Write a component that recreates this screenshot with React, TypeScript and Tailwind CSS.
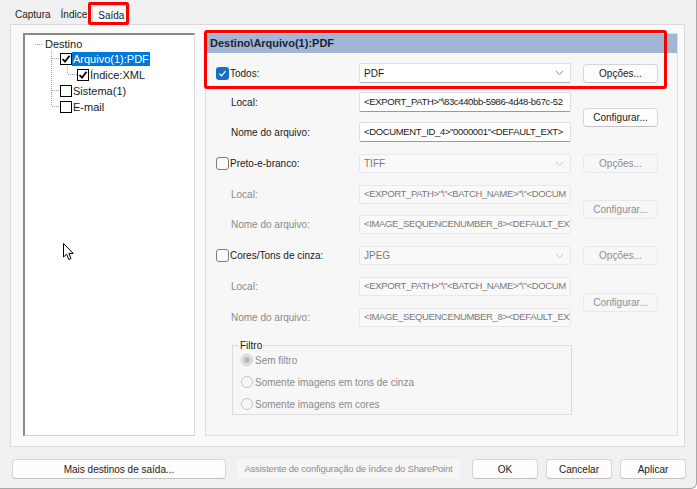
import React from "react";

const font = { fontFamily: '"Liberation Sans", Arial, sans-serif' };

function Check({ blue }: { blue?: boolean }) {
  if (blue) {
    return (
      <span className="w-[13px] h-[13px] rounded-[3px] bg-[#1a6fc4] flex items-center justify-center shrink-0">
        <svg width="9" height="9" viewBox="0 0 9 9">
          <path d="M1.5 4.8 L3.6 6.8 L7.6 2.2" stroke="#ffffff" strokeWidth="1.2" fill="none" />
        </svg>
      </span>
    );
  }
  return <span className="w-[13px] h-[13px] rounded-[3px] border shrink-0 bg-[#fbfbfb] border-[#7c7c7c]" />;
}

function TreeBox({ checked }: { checked?: boolean }) {
  return (
    <span className="w-[12px] h-[12px] border-[1.5px] border-black bg-white flex items-center justify-center shrink-0">
      {checked && (
        <svg width="10" height="10" viewBox="0 0 10 10">
          <path d="M1.5 5 L4 7.6 L8.6 1.8" stroke="#000" strokeWidth="1.8" fill="none" />
        </svg>
      )}
    </span>
  );
}

function Chevron({ light }: { light?: boolean }) {
  return (
    <svg width="9" height="6" viewBox="0 0 9 6" className="shrink-0">
      <path d="M1 1 L4.5 4.5 L8 1" stroke={light ? "#c8c8c8" : "#8a8a8a"} strokeWidth="1" fill="none" />
    </svg>
  );
}

function Select({ value, disabled, h }: { value: string; disabled?: boolean; h: string }) {
  return (
    <div
      className={`w-[212px] shrink-0 ${h} flex items-center justify-between pl-[4px] pr-[6px] rounded-[2px] border ${
        disabled ? "bg-[#f9f9f9] border-[#e8e8e8] text-[#7a7a7a]" : "bg-white border-[#dedede] border-b-[#b5b5b5] text-[#1a1a1a]"
      }`}
    >
      <span>{value}</span>
      <Chevron light={disabled} />
    </div>
  );
}

function Input({ value, disabled, h }: { value: string; disabled?: boolean; h: string }) {
  return (
    <div
      className={`w-[212px] shrink-0 ${h} flex items-center pl-[4px] overflow-hidden whitespace-nowrap rounded-[2px] border text-[9.5px] tracking-[-0.35px] ${
        disabled ? "bg-[#f9f9f9] border-[#e8e8e8] text-[#7a7a7a]" : "bg-white border-[#dedede] border-b-[#9a9a9a] text-[#1a1a1a]"
      }`}
    >
      {value}
    </div>
  );
}

function Btn({ label, disabled, w = "w-[75px]", h = "h-[19px]" }: { label: string; disabled?: boolean; w?: string; h?: string }) {
  return (
    <div
      className={`${w} ${h} shrink-0 flex items-center justify-center rounded-[4px] border ${
        disabled ? "bg-[#f7f7f7] border-[#e9e9e9] text-[#8e8e8e]" : "bg-[#fdfdfd] border-[#d6d6d6] border-b-[#c2c2c2] text-[#1a1a1a]"
      }`}
    >
      {label}
    </div>
  );
}

function SubRow({ label, value, disabled, h }: { label: string; value: string; disabled?: boolean; h: string }) {
  return (
    <div className="flex items-center">
      <span className={`w-[143px] shrink-0 pl-[15px] ${disabled ? "text-[#8a8a8a]" : "text-[#1a1a1a]"}`}>{label}</span>
      <Input value={value} disabled={disabled} h={h} />
    </div>
  );
}

function Radio({ label, checked }: { label: string; checked?: boolean }) {
  return (
    <div className="flex items-center gap-[2px] h-[22px] text-[#8a8a8a]">
      <span className="w-[12px] h-[12px] rounded-full border border-[#c4c4c4] bg-[#f7f7f7] flex items-center justify-center">
        {checked && <span className="w-[8px] h-[8px] rounded-full bg-[#b5b5b5] border-[2px] border-[#c9c9c9]" />}
      </span>
      <span>{label}</span>
    </div>
  );
}

function Tree() {
  return (
    <div className="relative w-[172px] h-[403px] bg-white border-l-2 border-t-2 border-[#8a8a8a] border-r border-b border-r-[#dcdcdc] border-b-[#cfcfcf] text-[11px] text-[#1a1a1a]">
      {/* connector lines */}
      <svg className="absolute left-0 top-0" width="120" height="90">
        <g stroke="#a0a0a0" strokeWidth="1" strokeDasharray="1 1">
          <line x1="10" y1="9.5" x2="18" y2="9.5" />
          <line x1="26.5" y1="15" x2="26.5" y2="71" />
          <line x1="27" y1="23.5" x2="35" y2="23.5" />
          <line x1="42.5" y1="31" x2="42.5" y2="39" />
          <line x1="43" y1="39.5" x2="52" y2="39.5" />
          <line x1="27" y1="55.5" x2="35" y2="55.5" />
          <line x1="27" y1="71.5" x2="35" y2="71.5" />
        </g>
      </svg>
      <div className="flex flex-col pt-[2px]">
        <div className="h-[14px] pl-[20px] flex items-center">Destino</div>
        <div className="h-[16px] pl-[35px] flex items-center">
          <TreeBox checked />
          <span className="bg-[#0078d7] text-white px-[1px] h-[14px] flex items-center">Arquivo(1):PDF</span>
        </div>
        <div className="h-[16px] pl-[52px] flex items-center gap-[1px]">
          <TreeBox checked />
          <span>Índice:XML</span>
        </div>
        <div className="h-[16px] pl-[35px] flex items-center gap-[1px]">
          <TreeBox />
          <span>Sistema(1)</span>
        </div>
        <div className="h-[16px] pl-[35px] flex items-center gap-[1px]">
          <TreeBox />
          <span>E-mail</span>
        </div>
      </div>
      {/* mouse pointer */}
      <svg className="absolute left-[38px] top-[208px]" width="12" height="18" viewBox="0 0 12 18">
        <path d="M0.5 0.5 L0.5 14 L3.6 11.2 L5.8 16.5 L8 15.6 L5.9 10.4 L10.2 10.4 Z" fill="#ffffff" stroke="#000" strokeWidth="1" />
      </svg>
    </div>
  );
}

function DetailPanel() {
  return (
    <div className="relative w-[473px] h-[403px] bg-[#f7f7f7] border border-[#dcdcdc] text-[10px]">
      <div className="h-[19px] bg-[#a0b6d4] flex items-center pl-[4px] text-[11px] font-bold text-[#1c2333]">
        Destino\Arquivo(1):PDF
      </div>
      <div className="pl-[10px] flex flex-col">
        {/* Todos */}
        <div className="flex items-center mt-[10px] h-[20px]">
          <div className="w-[143px] shrink-0 flex items-center gap-[1px] text-[#1a1a1a]">
            <Check blue />
            <span>Todos:</span>
          </div>
          <Select value="PDF" h="h-[20px]" />
          <div className="ml-[12px]">
            <Btn label="Opções..." />
          </div>
        </div>
        <div className="flex items-center mt-[9px]">
          <div className="flex flex-col gap-[10px]">
            <SubRow label="Local:" value={'<EXPORT_PATH>"\\83c440bb-5986-4d48-b67c-52'} h="h-[20px]" />
            <SubRow label="Nome do arquivo:" value={'<DOCUMENT_ID_4>"0000001"<DEFAULT_EXT>'} h="h-[20px]" />
          </div>
          <div className="ml-[12px]">
            <Btn label="Configurar..." />
          </div>
        </div>

        {/* Preto-e-branco */}
        <div className="flex items-center mt-[12px] h-[19px]">
          <div className="w-[143px] shrink-0 flex items-center gap-[1px] text-[#1a1a1a]">
            <Check />
            <span>Preto-e-branco:</span>
          </div>
          <Select value="TIFF" disabled h="h-[19px]" />
          <div className="ml-[12px]">
            <Btn label="Opções..." disabled />
          </div>
        </div>
        <div className="flex items-center mt-[12px]">
          <div className="flex flex-col gap-[11px]">
            <SubRow label="Local:" value={'<EXPORT_PATH>"\\"<BATCH_NAME>"\\"<DOCUM'} disabled h="h-[19px]" />
            <SubRow label="Nome do arquivo:" value="<IMAGE_SEQUENCENUMBER_8><DEFAULT_EXT:" disabled h="h-[19px]" />
          </div>
          <div className="ml-[12px]">
            <Btn label="Configurar..." disabled />
          </div>
        </div>

        {/* Cores */}
        <div className="flex items-center mt-[12px] h-[19px]">
          <div className="w-[143px] shrink-0 flex items-center gap-[1px] text-[#1a1a1a]">
            <Check />
            <span>Cores/Tons de cinza:</span>
          </div>
          <Select value="JPEG" disabled h="h-[19px]" />
          <div className="ml-[12px]">
            <Btn label="Opções..." disabled />
          </div>
        </div>
        <div className="flex items-center mt-[12px]">
          <div className="flex flex-col gap-[12px]">
            <SubRow label="Local:" value={'<EXPORT_PATH>"\\"<BATCH_NAME>"\\"<DOCUM'} disabled h="h-[19px]" />
            <SubRow label="Nome do arquivo:" value="<IMAGE_SEQUENCENUMBER_8><DEFAULT_EXT:" disabled h="h-[19px]" />
          </div>
          <div className="ml-[12px]">
            <Btn label="Configurar..." disabled />
          </div>
        </div>

        {/* Filtro */}
        <fieldset className="ml-[16px] mt-[11px] w-[340px] h-[77px] border border-[#dcdcdc] px-[8px] pb-[2px]">
          <legend className="px-[1px] -ml-[2px] text-[#1a1a1a]">Filtro</legend>
          <div className="flex flex-col -mt-[4px]">
            <Radio label="Sem filtro" checked />
            <Radio label="Somente imagens em tons de cinza" />
            <Radio label="Somente imagens em cores" />
          </div>
        </fieldset>
      </div>
    </div>
  );
}

export default function App() {
  return (
    <div
      className="relative w-[697px] h-[489px] bg-[#f0f0f0] text-[10px] border-r border-b border-[#a8a8a8] rounded-br-[6px] overflow-hidden"
      style={font}
    >
      {/* Tabs */}
      <div className="h-[24px] flex items-end pl-[10px] text-[10px] text-[#1a1a1a]">
        <div className="h-[19px] px-[5px] flex items-center">Captura</div>
        <div className="h-[19px] px-[5px] flex items-center">Índice</div>
        <div className="h-[20px] px-[5px] flex items-center bg-[#f9f9f9] border border-b-0 border-[#d6d6d6] rounded-t-[2px] relative top-[1px]">
          Saída
        </div>
      </div>

      {/* Tab page */}
      <div className="mx-[10px] w-[675px] h-[423px] bg-[#f9f9f9] border border-[#dadada] pt-[8px] pl-[12px] flex gap-[10px]">
        <Tree />
        <DetailPanel />
      </div>

      {/* Bottom buttons */}
      <div className="flex items-center mt-[12px] pl-[12px] text-[10px]">
        <Btn label="Mais destinos de saída..." w="w-[214px]" h="h-[20px]" />
        <div className="ml-[11px] w-[223px] shrink-0 h-[20px] flex items-center justify-center bg-[#f6f6f6] rounded-[3px] text-[#8e8e8e] text-[9.5px] tracking-[-0.2px] whitespace-nowrap">
          Assistente de configuração de índice do SharePoint
        </div>
        <div className="ml-[12px]">
          <Btn label="OK" w="w-[66px]" h="h-[20px]" />
        </div>
        <div className="ml-[8px]">
          <Btn label="Cancelar" w="w-[66px]" h="h-[20px]" />
        </div>
        <div className="ml-[8px]">
          <Btn label="Aplicar" w="w-[66px]" h="h-[20px]" />
        </div>
      </div>

      {/* Red annotation boxes */}
      <div className="absolute left-[88px] top-[2px] w-[41px] h-[23px] border-[3px] border-[#ff0000] rounded-[2px]" />
      <div className="absolute left-[204px] top-[30px] w-[463px] h-[59px] border-[3px] border-[#ff0000] rounded-[3px]" />
    </div>
  );
}
